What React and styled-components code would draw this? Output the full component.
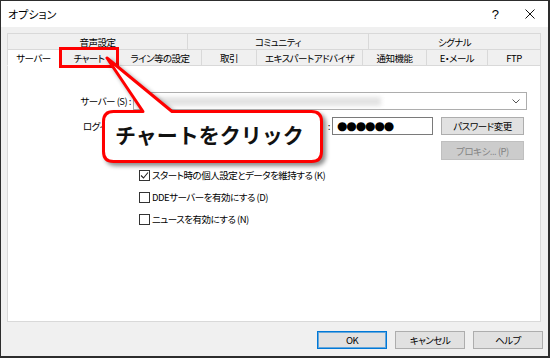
import styled, { createGlobalStyle } from "styled-components";

const GlobalStyle = createGlobalStyle`
  html, body {
    margin: 0;
    padding: 0;
    background: #2d2d2d;
  }
  body {
    width: 550px;
    height: 358px;
    overflow: hidden;
  }
`;

const uiFont = `"Noto Sans CJK JP", "Noto Sans", sans-serif`;

const upperTabs = [
    { label: "音声設定", w: 181 },
    { label: "コミュニティ", w: 181 },
    { label: "シグナル", w: 172 },
];

const lowerTabs = [
    { label: "サーバー", w: 53, active: true },
    { label: "チャート", w: 59, mark: true },
    { label: "ライン等の設定", w: 83 },
    { label: "取引", w: 55 },
    { label: "エキスパートアドバイザ", w: 106 },
    { label: "通知機能", w: 64 },
    { label: "E・メール", w: 61 },
    { label: "FTP", w: 53 },
];

const checks = [
    { label: "スタート時の個人設定とデータを維持する (K)", on: true },
    { label: "DDEサーバーを有効にする (D)", on: false },
    { label: "ニュースを有効にする (N)", on: false },
];

function App() {
    return (
        <>
        <GlobalStyle />
        <Window>
            <TitleBar>
                <Title>オプション</Title>
                <TitleButton $w={34}>?</TitleButton>
                <TitleButton $w={36}>
                    <svg width="10" height="10" viewBox="0 0 10 10">
                        <path d="M0.5 0.5 L9.5 9.5 M9.5 0.5 L0.5 9.5" stroke="#111" strokeWidth="1" />
                    </svg>
                </TitleButton>
            </TitleBar>

            <Body>
                <TabStrip>
                    <TabRow $h={16}>
                        {upperTabs.map((t, i) => (
                            <Tab key={t.label} $w={t.w} $first={i === 0}>{t.label}</Tab>
                        ))}
                    </TabRow>
                    <TabRow $h={17}>
                        {lowerTabs.map((t, i) => (
                            <Tab key={t.label} $w={t.w} $first={i === 0} $bottom $active={t.active} $mark={t.mark}>
                                {t.label}
                            </Tab>
                        ))}
                    </TabRow>
                </TabStrip>

                <Panel>
                    <FormRow $top={26}>
                        <Label $w={123}>サーバー (S) :</Label>
                        <Combo>
                            <Blurred />
                            <svg width="8" height="5" viewBox="0 0 8 5">
                                <polyline points="0.5,0.5 4,4 7.5,0.5" fill="none" stroke="#555" strokeWidth="1" />
                            </svg>
                        </Combo>
                    </FormRow>
                    <FormRow $top={7}>
                        <Label $w={123}>ログイン (L) :</Label>
                        <TextBox $w={110} />
                        <Label $w={87} $spread>パスワード :</Label>
                        <TextBox $w={101}>●●●●●●</TextBox>
                        <Button $w={83} $h={18} $gap={8}>パスワード変更</Button>
                    </FormRow>
                    <FormRow $top={6} $indent={433}>
                        <Button $w={83} $h={19} $disabled>プロキシ... (P)</Button>
                    </FormRow>

                    <Checks>
                        {checks.map((c) => (
                            <CheckRow key={c.label}>
                                <Box>
                                    {c.on && (
                                        <svg width="9" height="9" viewBox="0 0 9 9">
                                            <polyline points="1,4.5 3.5,7 8,1.5" fill="none" stroke="#222" strokeWidth="1.1" />
                                        </svg>
                                    )}
                                </Box>
                                {c.label}
                            </CheckRow>
                        ))}
                    </Checks>
                </Panel>

                <Footer>
                    <Button $w={70} $h={18} $default>OK</Button>
                    <Button $w={70} $h={18}>キャンセル</Button>
                    <Button $w={70} $h={18}>ヘルプ</Button>
                </Footer>
            </Body>

            <Callout>
                <svg width="221" height="53" viewBox="0 0 221 53">
                    <path
                        d="M11.5 1.5 H41 L5 -52 L70 1.5 H209.5 Q219.5 1.5 219.5 11.5 V41.5 Q219.5 51.5 209.5 51.5 H11.5 Q1.5 51.5 1.5 41.5 V11.5 Q1.5 1.5 11.5 1.5 Z"
                        fill="#fff"
                        stroke="#f00"
                        strokeWidth="3"
                        strokeLinejoin="round"
                    />
                </svg>
                <CalloutText>チャートをクリック</CalloutText>
            </Callout>
        </Window>
        </>
    );
}

export default App;

const Window = styled.div`
    position: relative;
    width: 547px;
    height: 355px;
    margin: 1px 2px 2px 1px;
    background: #f0f0f0;
    display: flex;
    flex-direction: column;
    font-family: ${uiFont};
    font-size: 9.5px;
    letter-spacing: -0.5px;
    font-feature-settings: "palt";
    color: #000;
`;

const TitleBar = styled.div`
    height: 26px;
    flex: none;
    background: #fff;
    display: flex;
    align-items: center;
    padding-left: 7px;
`;

const Title = styled.span`
    flex: 1;
    font-size: 11px;
    letter-spacing: 0;
`;

const TitleButton = styled.div`
    width: ${(p) => p.$w}px;
    height: 26px;
    display: flex;
    align-items: center;
    justify-content: center;
    font-family: "Liberation Sans", sans-serif;
    font-size: 13px;
`;

const Body = styled.div`
    flex: 1;
    display: flex;
    flex-direction: column;
    padding: 6px 0 7px;
    min-height: 0;
`;

const TabStrip = styled.div`
    margin: 0 7px 0 6px;
    display: flex;
    flex-direction: column;
`;

const TabRow = styled.div`
    display: flex;
    height: ${(p) => p.$h}px;
`;

const Tab = styled.div`
    position: relative;
    box-sizing: border-box;
    width: ${(p) => p.$w}px;
    display: flex;
    align-items: center;
    justify-content: center;
    white-space: nowrap;
    border: 1px solid #d9d9d9;
    border-left-width: ${(p) => (p.$first ? 1 : 0)}px;
    border-bottom-width: ${(p) => (p.$bottom ? 1 : 0)}px;
    border-bottom-color: ${(p) => (p.$active ? "#fff" : "#d9d9d9")};
    background: ${(p) => (p.$active ? "#fff" : "#f0f0f0")};

    ${(p) => p.$mark && `
        &::after {
            content: "";
            position: absolute;
            inset: -3px -1px -3px -1px;
            border: 3px solid #f00;
            z-index: 2;
        }
    `}
`;

const Panel = styled.div`
    flex: 1;
    margin: 0 7px 0 6px;
    background: #fff;
    border: 1px solid #d9d9d9;
    border-top: none;
    display: flex;
    flex-direction: column;
`;

const FormRow = styled.div`
    display: flex;
    align-items: center;
    margin-top: ${(p) => p.$top}px;
    padding-left: ${(p) => p.$indent || 0}px;
`;

const Label = styled.div`
    width: ${(p) => p.$w}px;
    margin-right: 2px;
    text-align: right;
    white-space: nowrap;
    word-spacing: ${(p) => (p.$spread ? 5 : 0)}px;
`;

const Combo = styled.div`
    box-sizing: border-box;
    width: 394px;
    height: 18px;
    border: 1px solid #adadad;
    background: #fff;
    display: flex;
    align-items: center;
    justify-content: space-between;
    padding: 0 6px 0 3px;
`;

const Blurred = styled.div`
    width: 244px;
    height: 9px;
    background: #e3e3e3;
    filter: blur(2px);
`;

const TextBox = styled.div`
    box-sizing: border-box;
    width: ${(p) => p.$w}px;
    height: 18px;
    border: 1px solid #7a7a7a;
    background: #fff;
    display: flex;
    align-items: center;
    padding-left: 4px;
    font-family: "DejaVu Sans", sans-serif;
    font-size: 12px;
    letter-spacing: -1.1px;
`;

const Button = styled.div`
    box-sizing: border-box;
    width: ${(p) => p.$w}px;
    height: ${(p) => p.$h}px;
    margin-left: ${(p) => p.$gap || 0}px;
    display: flex;
    align-items: center;
    justify-content: center;
    white-space: nowrap;
    background: ${(p) => (p.$disabled ? "#cccccc" : "#e1e1e1")};
    border: 1px solid ${(p) => (p.$default ? "#0078d7" : p.$disabled ? "#bfbfbf" : "#adadad")};
    box-shadow: ${(p) => (p.$default ? "inset 0 0 0 1px rgba(0, 120, 215, 0.55)" : "none")};
    color: ${(p) => (p.$disabled ? "#838383" : "#000")};
`;

const Checks = styled.div`
    margin-top: 4px;
    padding-left: 131px;
    display: flex;
    flex-direction: column;
`;

const CheckRow = styled.div`
    height: 22px;
    display: flex;
    align-items: center;
    gap: 2px;
    white-space: nowrap;
`;

const Box = styled.div`
    box-sizing: border-box;
    width: 11px;
    height: 11px;
    border: 1px solid #333;
    background: #fff;
    display: flex;
    align-items: center;
    justify-content: center;
`;

const Footer = styled.div`
    flex: none;
    height: 18px;
    margin-top: 9px;
    padding-right: 5px;
    display: flex;
    justify-content: flex-end;
    gap: 8px;
`;

const Callout = styled.div`
    position: absolute;
    left: 101px;
    top: 109px;
    width: 221px;
    height: 53px;
    z-index: 5;
    display: flex;
    align-items: center;
    padding: 0 0 6px 13px;
    box-sizing: border-box;

    svg {
        position: absolute;
        left: 0;
        top: 0;
        overflow: visible;
        filter: drop-shadow(3px 3px 2px rgba(0, 0, 0, 0.45));
    }
`;

const CalloutText = styled.span`
    position: relative;
    font-size: 21px;
    font-weight: 700;
    letter-spacing: 0;
    font-feature-settings: normal;
    color: #111;
    white-space: nowrap;
`;
